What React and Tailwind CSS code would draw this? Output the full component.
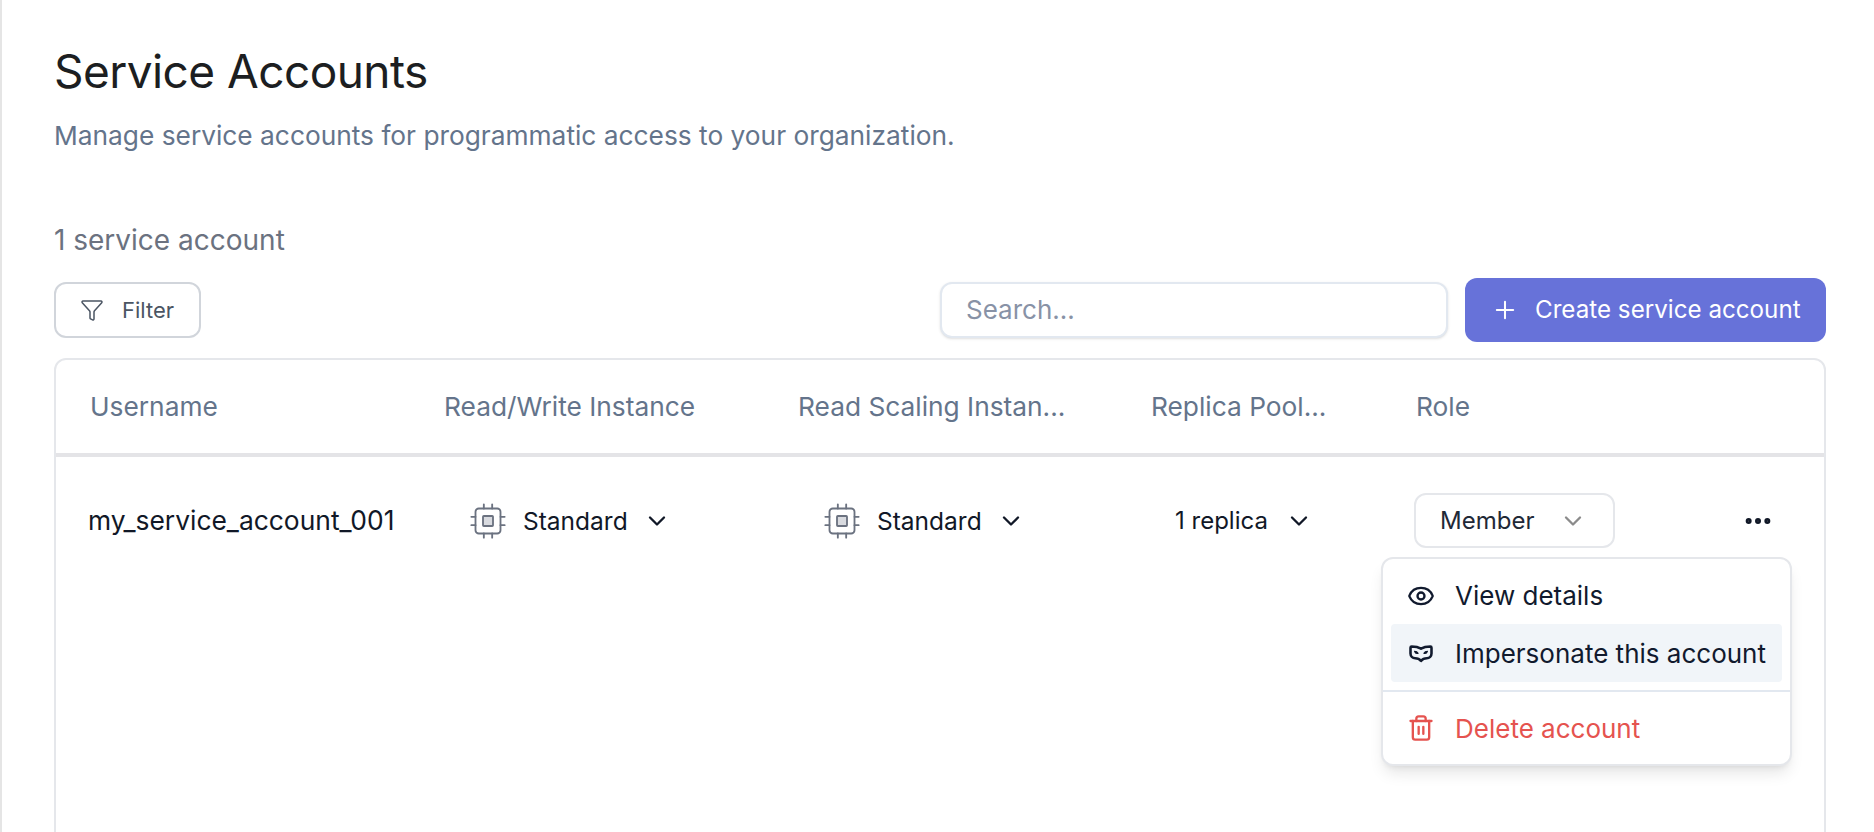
import { Funnel, Plus, ChevronDown, Ellipsis, Eye, Trash2 } from 'lucide-react';

const ChipIcon = () => (
  <svg width="40" height="40" viewBox="0 0 24 24" fill="none" stroke="#6b7280" strokeWidth="1.1" strokeLinecap="round" strokeLinejoin="round">
    <rect x="4.5" y="4.5" width="15" height="15" rx="2" />
    <rect x="9" y="9" width="6" height="6" rx="0.5" fill="#d9dbe0" />
    <path d="M9.5 2v2.5M14.5 2v2.5M9.5 19.5V22M14.5 19.5V22M2 9.5h2.5M2 14.5h2.5M19.5 9.5H22M19.5 14.5H22" />
  </svg>
);

const MaskIcon = () => (
  <svg width="28" height="28" viewBox="0 0 24 24" fill="none" stroke="currentColor" strokeWidth="2.2" strokeLinejoin="round">
    <path d="M4 6.500c3 0 5.800.5 8 1.800 2.200-1.300 5-1.800 8-1.800.7 0 1 .4 1 1v5a4 4 0 0 1-4 4c-2 0-3.700.6-5 2.200-1.300-1.600-3-2.200-5-2.200a4 4 0 0 1-4-4v-5c0-.6.300-1 1-1z" />
    <path d="M6.500 10.500c1.300 0 2.300.5 3 1.800-1.500.4-2.500-.2-3-1.800zM17.500 10.500c-1.300 0-2.300.5-3 1.800 1.500.4 2.500-.2 3-1.800z" fill="currentColor" strokeWidth="1" />
  </svg>
);

const InstanceCell = ({ label }) => (
  <div className="flex items-center pl-[26px]">
    <ChipIcon />
    <span className="ml-[15px] text-[24.5px] text-[#111827]">{label}</span>
    <ChevronDown size={28} strokeWidth={2} className="ml-[15px] text-[#111827]" />
  </div>
);

export default function App() {
  return (
    <div className="h-screen overflow-hidden bg-white border-l-2 border-[#e5e5e5] pl-[52px] pr-[48px] pt-[41px] font-['Inter',sans-serif] flex flex-col">
      <h1 className="text-[46px] leading-[60px] font-normal text-[#1c1e21] tracking-[-0.55px]">Service Accounts</h1>
      <p className="mt-[19px] text-[26.3px] leading-[32px] text-[#64748b]">
        Manage service accounts for programmatic access to your organization.
      </p>

      <p className="mt-[72px] text-[28px] leading-[32px] text-[#6b7280]">1 service account</p>

      <div className="mt-[22px] flex items-center justify-between">
        <button className="flex items-center gap-[18px] h-[56px] w-[147px] pl-[24px] rounded-[12px] border-2 border-[#d1d5db] bg-white text-[22px] text-[#4b5563]">
          <Funnel size={24} strokeWidth={1.5} />
          Filter
        </button>
        <div className="flex items-center gap-[17px]">
          <input
            placeholder="Search..."
            className="w-[508px] h-[56px] px-[24px] pb-[1px] rounded-[12px] border-2 border-[#e2e8f0] bg-white text-[26px] shadow-sm placeholder:text-[#8892a6] outline-none"
          />
          <button className="flex items-center gap-[16px] h-[64px] w-[361px] pl-[26px] rounded-[12px] bg-[#6772d9] text-[24.2px] text-white">
            <Plus size={28} strokeWidth={1.75} />
            Create service account
          </button>
        </div>
      </div>

      <div className="relative mt-[16px] flex-1 -mb-[20px] rounded-[12px] border-2 border-[#e5e7eb]">
        <div className="grid grid-cols-[354px_354px_354px_265px_1fr] h-[97px] items-center border-b-[4px] border-[#e4e4e7] pl-[34px] text-[26.3px] text-[#64748b]">
          <span>Username</span>
          <span>Read/Write Instance</span>
          <span>Read Scaling Instan...</span>
          <span className="-ml-[1px]">Replica Pool...</span>
          <span className="-ml-[1px]">Role</span>
        </div>

        <div className="grid grid-cols-[354px_354px_354px_265px_1fr] h-[128px] items-center pl-[32px] text-[26.4px] text-[#111827]">
          <span>my_service_account_001</span>
          <InstanceCell label="Standard" />
          <InstanceCell label="Standard" />
          <div className="flex items-center pl-[25px] text-[24px]">
            <span>1 replica</span>
            <ChevronDown size={28} strokeWidth={2} className="ml-[17px]" />
          </div>
          <div className="flex items-center justify-between pr-[50px]">
            <button className="flex items-center justify-between w-[201px] h-[55px] pl-[24px] pr-[26px] -ml-[1px] -mt-[1px] rounded-[12px] border-2 border-[#e5e7eb] bg-white text-[24px] text-[#1f2937]">
              Member
              <ChevronDown size={28} strokeWidth={2} className="text-[#8b8b8b]" />
            </button>
            <Ellipsis size={32} strokeWidth={2.5} className="text-[#111827]" />
          </div>
        </div>

        <div className="absolute top-[197px] right-[32px] w-[411px] rounded-[12px] border-2 border-[#e5e7eb] bg-white shadow-lg text-[26px]">
          <div className="px-[8px] pt-[8px] pb-[8px]">
            <div className="flex items-center gap-[20px] h-[57px] px-[16px] text-[#111a2e]">
              <Eye size={28} strokeWidth={2} />
              View details
            </div>
            <div className="flex items-center gap-[20px] h-[58px] px-[16px] rounded-[4px] bg-[#f1f5f9] text-[#111a2e]">
              <MaskIcon />
              Impersonate this account
            </div>
          </div>
          <div className="border-t-2 border-[#e2e8f0]" />
          <div className="px-[8px] py-[7px]">
            <div className="flex items-center gap-[20px] h-[58px] px-[16px] text-[#e5534f]">
              <Trash2 size={28} strokeWidth={2} />
              Delete account
            </div>
          </div>
        </div>
      </div>
    </div>
  );
}
